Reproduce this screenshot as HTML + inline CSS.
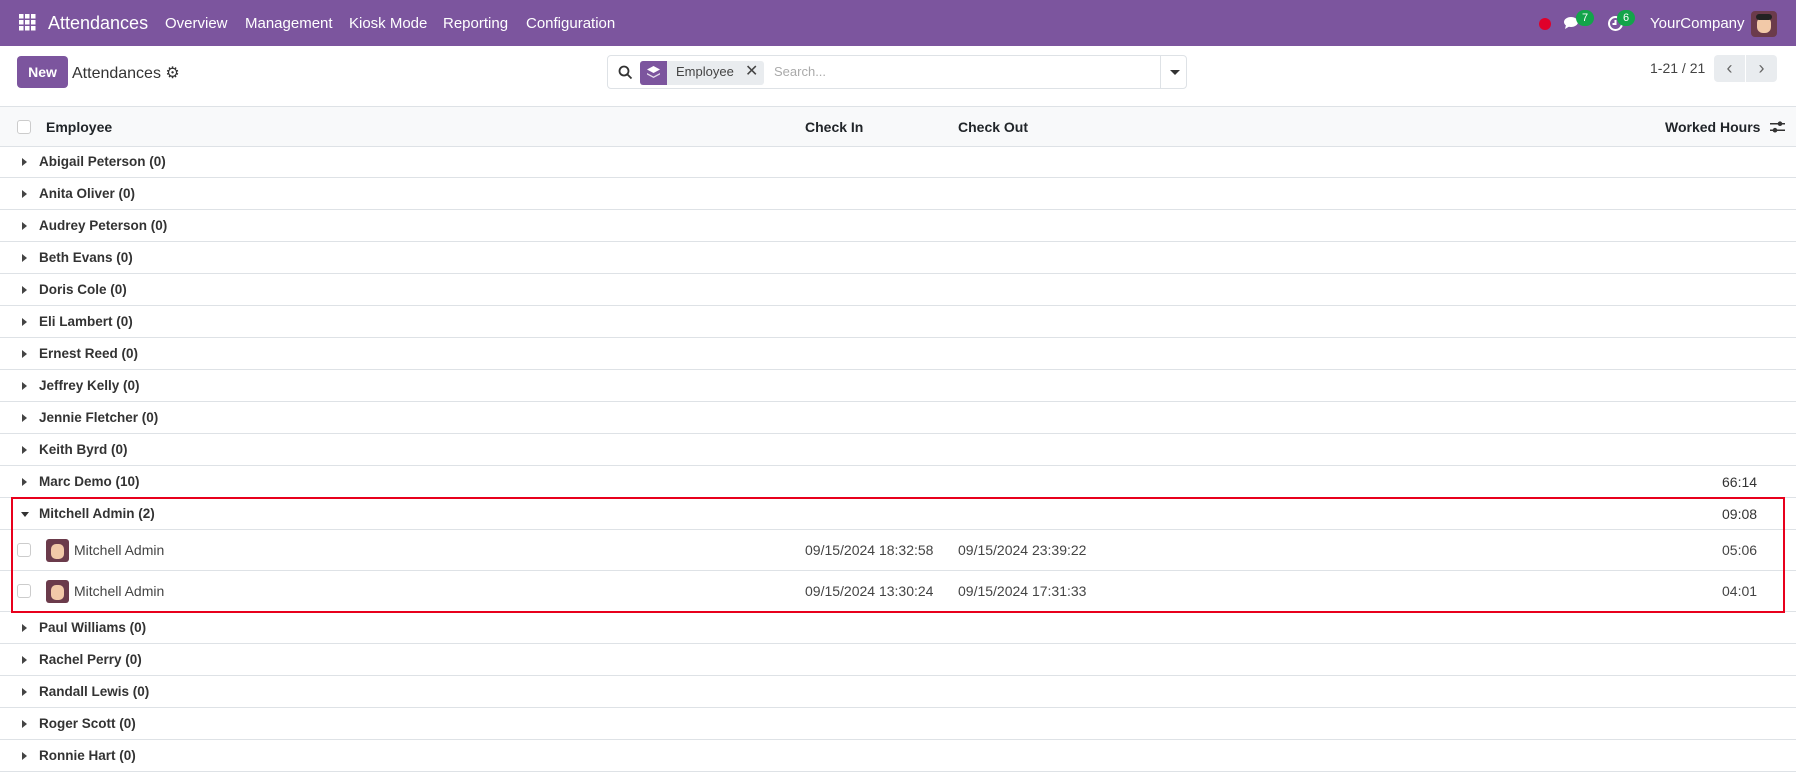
<!DOCTYPE html>
<html><head><meta charset="utf-8"><style>
*{box-sizing:border-box;margin:0;padding:0}
body{width:1796px;height:771px;overflow:hidden;background:#fff;font-family:"Liberation Sans",sans-serif;font-size:14px;color:#212529;position:relative}
.nav{position:absolute;left:0;top:0;width:1796px;height:46px;background:#7c559e;color:#fff}
.nav span{position:absolute;top:15px;font-size:15px}
.a{position:absolute}
.row{position:absolute;left:0;width:1796px;border-bottom:1px solid #dee2e6}
.g{height:32px}
.g .t{position:absolute;left:39px;top:8px;font-weight:bold;color:#333;font-size:13.5px}
.g .c{position:absolute;left:22px;top:12px;width:0;height:0;border-top:4px solid transparent;border-bottom:4px solid transparent;border-left:5px solid #444}
.cb{position:absolute;width:14px;height:14px;border:1px solid #ccc;border-radius:3px;background:#fff}
.r{height:41px}
.r span{position:absolute;top:12px;color:#444}
</style></head><body>
<div class="nav">
<svg class="a" style="left:19px;top:14px" width="17" height="17" viewBox="0 0 17 17" fill="#fff"><rect x="0" y="0" width="4.5" height="4.5"/><rect x="6" y="0" width="4.5" height="4.5"/><rect x="12" y="0" width="4.5" height="4.5"/><rect x="0" y="6" width="4.5" height="4.5"/><rect x="6" y="6" width="4.5" height="4.5"/><rect x="12" y="6" width="4.5" height="4.5"/><rect x="0" y="12" width="4.5" height="4.5"/><rect x="6" y="12" width="4.5" height="4.5"/><rect x="12" y="12" width="4.5" height="4.5"/></svg>
<span style="left:48px;top:13px;font-size:18px">Attendances</span>
<span style="left:165px">Overview</span>
<span style="left:245px">Management</span>
<span style="left:349px">Kiosk Mode</span>
<span style="left:443px">Reporting</span>
<span style="left:526px">Configuration</span>
<div class="a" style="left:1539px;top:18px;width:12px;height:12px;border-radius:6px;background:#e0002a"></div>
<svg class="a" style="left:1563px;top:14px" width="20" height="18" viewBox="0 0 20 18" fill="#fff"><ellipse cx="8" cy="8" rx="7" ry="5"/><path d="M3 11 L2 15 L7 12Z"/></svg>
<div class="a" style="left:1576px;top:10px;width:18px;height:16px;border-radius:8px;background:#13a44a;font-size:11px;text-align:center;line-height:16px">7</div>
<svg class="a" style="left:1607px;top:15px" width="17" height="17" viewBox="0 0 17 17" fill="none" stroke="#fff" stroke-width="2"><circle cx="8.5" cy="8.5" r="6.5"/><path d="M8.5 5v4h-3"/></svg>
<div class="a" style="left:1617px;top:10px;width:18px;height:16px;border-radius:8px;background:#13a44a;font-size:11px;text-align:center;line-height:16px">6</div>
<span style="left:1650px">YourCompany</span>
<div class="a" style="left:1751px;top:11px;width:26px;height:26px;border-radius:4px;background:#6b3b4b"><div class="a" style="left:6px;top:6px;width:14px;height:16px;border-radius:6px;background:#f2c9a8"></div><div class="a" style="left:5px;top:3px;width:16px;height:6px;border-radius:3px;background:#222"></div></div>
</div>
<div class="a" style="left:17px;top:56px;width:51px;height:32px;background:#7c559e;border-radius:4px;color:#fff;font-weight:bold;text-align:center;line-height:32px">New</div>
<div class="a" style="left:72px;top:63px;font-size:16px;color:#333">Attendances ⚙</div>
<div class="a" style="left:607px;top:55px;width:580px;height:34px;border:1px solid #dee2e6;border-radius:4px">
<svg class="a" style="left:10px;top:9px" width="15" height="15" viewBox="0 0 15 15" fill="none" stroke="#333" stroke-width="1.8"><circle cx="6" cy="6" r="4.5"/><path d="M9.5 9.5l4 4"/></svg>
<div class="a" style="left:32px;top:5px;width:124px;height:24px;background:#e9ecef;border-radius:3px"></div>
<div class="a" style="left:32px;top:5px;width:27px;height:24px;background:#7c559e;border-radius:3px 0 0 3px"><svg class="a" style="left:7px;top:5px" width="13" height="14" viewBox="0 0 13 14" fill="#fff"><path d="M6.5 0L13 3.5 6.5 7 0 3.5Z"/><path d="M0 7l6.5 3.5L13 7v1.5L6.5 12 0 8.5Z" opacity=".8"/></svg></div>
<div class="a" style="left:68px;top:8px;font-size:13px;color:#444">Employee</div>
<div class="a" style="left:137px;top:5px;font-size:16px;color:#444">✕</div>
<div class="a" style="left:166px;top:8px;font-size:13px;color:#aaa">Search...</div>
<div class="a" style="left:552px;top:0;width:1px;height:32px;background:#dee2e6"></div>
<div class="a" style="left:562px;top:14px;border-left:5px solid transparent;border-right:5px solid transparent;border-top:5px solid #333"></div>
</div>
<div class="a" style="left:1650px;top:60px;color:#444">1-21 / 21</div>
<div class="a" style="left:1714px;top:55px;width:31px;height:27px;background:#e9ecef;border-radius:4px 0 0 4px;text-align:center;line-height:26px;color:#666;font-size:18px">‹</div>
<div class="a" style="left:1746px;top:55px;width:31px;height:27px;background:#e9ecef;border-radius:0 4px 4px 0;text-align:center;line-height:26px;color:#666;font-size:18px">›</div>
<div class="row" style="top:106px;height:41px;background:#f8f9fa;border-top:1px solid #dee2e6">
<div class="cb" style="left:17px;top:13px"></div>
<span class="a" style="left:46px;top:12px;font-weight:bold">Employee</span>
<span class="a" style="left:805px;top:12px;font-weight:bold">Check In</span>
<span class="a" style="left:958px;top:12px;font-weight:bold">Check Out</span>
<span class="a" style="left:1665px;top:12px;font-weight:bold">Worked Hours</span>
<svg class="a" style="left:1770px;top:13px" width="15" height="14" viewBox="0 0 15 14" fill="#333"><rect x="0" y="3" width="15" height="1.5"/><rect x="0" y="9.5" width="15" height="1.5"/><circle cx="10" cy="3.7" r="2.3"/><circle cx="5" cy="10.2" r="2.3"/></svg>
</div>
<div class="row g" style="top:146px"><i class="c"></i><span class="t">Abigail Peterson (0)</span></div>
<div class="row g" style="top:178px"><i class="c"></i><span class="t">Anita Oliver (0)</span></div>
<div class="row g" style="top:210px"><i class="c"></i><span class="t">Audrey Peterson (0)</span></div>
<div class="row g" style="top:242px"><i class="c"></i><span class="t">Beth Evans (0)</span></div>
<div class="row g" style="top:274px"><i class="c"></i><span class="t">Doris Cole (0)</span></div>
<div class="row g" style="top:306px"><i class="c"></i><span class="t">Eli Lambert (0)</span></div>
<div class="row g" style="top:338px"><i class="c"></i><span class="t">Ernest Reed (0)</span></div>
<div class="row g" style="top:370px"><i class="c"></i><span class="t">Jeffrey Kelly (0)</span></div>
<div class="row g" style="top:402px"><i class="c"></i><span class="t">Jennie Fletcher (0)</span></div>
<div class="row g" style="top:434px"><i class="c"></i><span class="t">Keith Byrd (0)</span></div>
<div class="row g" style="top:466px"><i class="c"></i><span class="t">Marc Demo (10)</span><span class="a" style="left:1722px;top:8px;color:#333">66:14</span></div>
<div class="row g" style="top:498px"><i class="a" style="left:21px;top:14px;border-left:4px solid transparent;border-right:4px solid transparent;border-top:5px solid #333"></i><span class="t">Mitchell Admin (2)</span><span class="a" style="left:1722px;top:8px;color:#333">09:08</span></div>
<div class="row r" style="top:530px"><div class="cb" style="left:17px;top:13px"></div><div class="a" style="left:46px;top:9px;width:23px;height:23px;border-radius:3px;background:#6b3b4b"><div class="a" style="left:5px;top:5px;width:13px;height:15px;border-radius:5px;background:#f2c9a8"></div></div><span style="left:74px">Mitchell Admin</span><span style="left:805px">09/15/2024 18:32:58</span><span style="left:958px">09/15/2024 23:39:22</span><span style="left:1722px">05:06</span></div>
<div class="row r" style="top:571px"><div class="cb" style="left:17px;top:13px"></div><div class="a" style="left:46px;top:9px;width:23px;height:23px;border-radius:3px;background:#6b3b4b"><div class="a" style="left:5px;top:5px;width:13px;height:15px;border-radius:5px;background:#f2c9a8"></div></div><span style="left:74px">Mitchell Admin</span><span style="left:805px">09/15/2024 13:30:24</span><span style="left:958px">09/15/2024 17:31:33</span><span style="left:1722px">04:01</span></div>
<div class="row g" style="top:612px"><i class="c"></i><span class="t">Paul Williams (0)</span></div>
<div class="row g" style="top:644px"><i class="c"></i><span class="t">Rachel Perry (0)</span></div>
<div class="row g" style="top:676px"><i class="c"></i><span class="t">Randall Lewis (0)</span></div>
<div class="row g" style="top:708px"><i class="c"></i><span class="t">Roger Scott (0)</span></div>
<div class="row g" style="top:740px"><i class="c"></i><span class="t">Ronnie Hart (0)</span></div>
<div class="a" style="left:11px;top:497px;width:1774px;height:116px;border:2px solid #e8001c"></div>
</body></html>
